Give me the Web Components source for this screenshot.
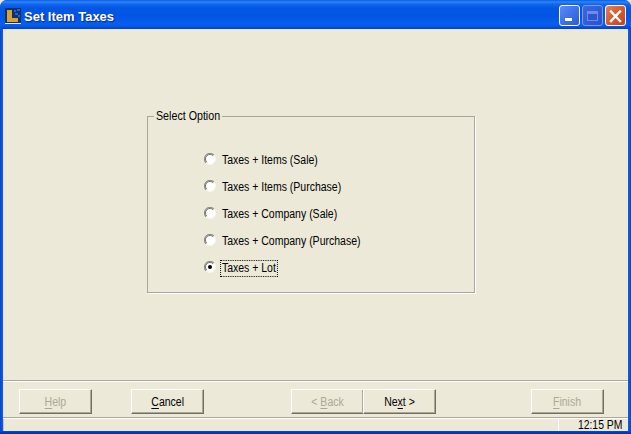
<!DOCTYPE html>
<html>
<head>
<meta charset="utf-8">
<title>Set Item Taxes</title>
<style>
    html, body { margin: 0; padding: 0; height: 100%; background: #ece9d8; }
    body { font: 12px "Liberation Sans", Arial, sans-serif; overflow: hidden; }
</style>
</head>
<body>
<xp-window caption="Set Item Taxes">
    <option-group label="Select Option">
        <option-radio>Taxes + Items (Sale)</option-radio>
        <option-radio>Taxes + Items (Purchase)</option-radio>
        <option-radio>Taxes + Company (Sale)</option-radio>
        <option-radio>Taxes + Company (Purchase)</option-radio>
        <option-radio checked>Taxes + Lot</option-radio>
    </option-group>
    <wizard-bar slot="footer"></wizard-bar>
    <status-bar slot="footer" time="12:15 PM"></status-bar>
</xp-window>

<script>
class CaptionButton extends HTMLElement {
    constructor() {
        super();
        this.attachShadow({ mode: 'open' });
    }

    connectedCallback() {
        const kind = this.getAttribute('kind');
        const glyphs = {
            min: '<rect x="6" y="13" width="7" height="3" fill="#fff"/>',
            max: '<rect x="5.5" y="6.5" width="10" height="9" fill="#2c55d0" stroke="#6d8ce6"/><rect x="5" y="6" width="11" height="3" fill="#6d8ce6"/>',
            close: '<path d="M6 6.5 15 16M15 6.5 6 16" stroke="#fff" stroke-width="2.4" stroke-linecap="square"/><path d="M1 3V1H4Q1.8 1.4 1 3Z" fill="#e8c89a"/>',
        };
        const looks = {
            min: 'linear-gradient(135deg, #5f8cf2 0, #3f72ea 50%, #2f5ad8 100%)',
            max: 'linear-gradient(135deg, #3a68e2 0, #2f5cd8 55%, #2a50cc 100%)',
            close: 'linear-gradient(135deg, #e0805c 0, #d8582f 50%, #c4431f 100%)',
        };
        const line = kind === 'max' ? '#7d9bea' : '#fff';
        this.shadowRoot.innerHTML = `
            <style>
                :host {
                    display: block;
                    width: 21px;
                    height: 21px;
                    box-sizing: border-box;
                    border: 1px solid ${line};
                    border-radius: 3px;
                    background: ${looks[kind]};
                    overflow: hidden;
                }
                svg { display: block; margin: -1px; }
            </style>
            <svg width="21" height="21" viewBox="0 0 21 21">${glyphs[kind]}</svg>
        `;
    }
}
customElements.define('caption-button', CaptionButton);

class XpWindow extends HTMLElement {
    constructor() {
        super();
        this.attachShadow({ mode: 'open' });
    }

    connectedCallback() {
        const caption = this.getAttribute('caption') || '';
        this.shadowRoot.innerHTML = `
            <style>
                :host {
                    display: flex;
                    flex-direction: column;
                    width: 631px;
                    height: 434px;
                    background:
                        linear-gradient(to bottom, transparent 431px, #0a4ada 431px, #00309c 434px),
                        linear-gradient(to right, #0a3fc8 0, #0a5ae8 2px, #0a5ae8 629px, #0a3fc8 631px);
                    border-radius: 7px 7px 0 0;
                    overflow: hidden;
                }
                .title {
                    height: 29px;
                    flex: none;
                    display: flex;
                    align-items: center;
                    padding: 0 5px 0 5px;
                    box-sizing: border-box;
                    background: linear-gradient(to bottom,
                        #0a5ce4 0, #2f84f6 2px, #1268ee 4px, #0357e4 8px, #0454e3 16px,
                        #0560ee 24px, #0558ea 26px, #0040d0 29px);
                }
                .icon { flex: none; display: block; margin-top: 2px; }
                .caption {
                    flex: 1;
                    margin-left: 3px;
                    margin-top: 3px;
                    color: #fff;
                    font: bold 13px "Liberation Sans", Arial, sans-serif;
                    text-shadow: 1px 1px 1px #0a2a90;
                    white-space: nowrap;
                }
                .buttons { display: flex; gap: 2px; margin-top: 2px; }
                .frame {
                    flex: 1;
                    min-height: 0;
                    display: flex;
                    flex-direction: column;
                    margin: 0 3px 3px;
                    background: #ece9d8;
                }
                .body {
                    flex: 1;
                    min-height: 0;
                    padding: 80px 154px 0 144px;
                }
                .footer { flex: none; }
            </style>
            <div class="title">
                <svg class="icon" width="16" height="16" viewBox="0 0 16 16">
                    <rect width="16" height="15" fill="#10306e"/>
                    <rect x="2" y="2" width="5" height="12" fill="#d4a236"/>
                    <rect x="2" y="10" width="11" height="4" fill="#d4a236"/>
                    <rect x="9" y="2" width="2" height="2" fill="#2a62c8"/>
                    <rect x="12" y="1" width="3" height="2" fill="#2a62c8"/>
                    <rect x="10" y="5" width="3" height="2" fill="#2a62c8"/>
                    <rect x="13" y="7" width="2" height="2" fill="#2a62c8"/>
                    <rect y="15" width="16" height="1" fill="#e8e8e8"/>
                </svg>
                <span class="caption">${caption}</span>
                <div class="buttons">
                    <caption-button kind="min"></caption-button>
                    <caption-button kind="max"></caption-button>
                    <caption-button kind="close"></caption-button>
                </div>
            </div>
            <div class="frame">
                <div class="body"><slot></slot></div>
                <div class="footer"><slot name="footer"></slot></div>
            </div>
        `;
    }
}
customElements.define('xp-window', XpWindow);

class OptionGroup extends HTMLElement {
    constructor() {
        super();
        this.attachShadow({ mode: 'open' });
    }

    connectedCallback() {
        const label = this.getAttribute('label') || '';
        this.shadowRoot.innerHTML = `
            <style>
                :host { display: block; width: 328px; }
                fieldset {
                    margin: 0;
                    padding: 0;
                    height: 184px;
                    box-sizing: border-box;
                    border: 1px solid #a9a79a;
                    box-shadow: 1px 1px 0 #fff;
                    display: block;
                }
                legend {
                    margin-left: 6px;
                    padding: 0 2px;
                    font: 12px "Liberation Sans", Arial, sans-serif;
                    color: #000;
                }
                legend span {
                    display: block;
                    width: 64px;
                    white-space: nowrap;
                    transform: scaleX(.89);
                    transform-origin: left;
                }
                .list {
                    display: flex;
                    flex-direction: column;
                    gap: 14px;
                    padding: 30px 0 0 56px;
                }
            </style>
            <fieldset>
                <legend><span>${label}</span></legend>
                <div class="list"><slot></slot></div>
            </fieldset>
        `;
    }
}
customElements.define('option-group', OptionGroup);

class OptionRadio extends HTMLElement {
    constructor() {
        super();
        this.attachShadow({ mode: 'open' });
    }

    connectedCallback() {
        const checked = this.hasAttribute('checked');
        this.shadowRoot.innerHTML = `
            <style>
                :host {
                    display: flex;
                    align-items: center;
                    height: 13px;
                    gap: 4px;
                    color: #000;
                    font: 12px "Liberation Sans", Arial, sans-serif;
                    white-space: nowrap;
                }
                svg { flex: none; display: block; }
                .text {
                    padding: 0 1px;
                    line-height: 15px;
                    height: 15px;
                    margin-top: 2px;
                    transform: scaleX(.875);
                    transform-origin: left;
                }
                :host([checked]) .text { outline: 1px dotted #000; }
            </style>
            <svg width="13" height="13" viewBox="0 0 13 13">
                <circle cx="6" cy="6" r="5.5" fill="#fff"/>
                <path d="M2.1 9.9A5.5 5.5 0 0 1 9.9 2.1" fill="none" stroke="#8f8d80" stroke-width="1.2"/>
                <path d="M2.8 9.2A4.5 4.5 0 0 1 9.2 2.8" fill="none" stroke="#55544c" stroke-width=".8"/>
                <path d="M2.1 9.9A5.5 5.5 0 0 0 9.9 2.1" fill="none" stroke="#f6f5ee" stroke-width="1.2"/>
                ${checked ? '<circle cx="6" cy="6" r="2" fill="#000"/>' : ''}
            </svg>
            <span class="text"><slot></slot></span>
        `;
    }
}
customElements.define('option-radio', OptionRadio);

class WizardButton extends HTMLElement {
    constructor() {
        super();
        this.attachShadow({ mode: 'open' });
    }

    connectedCallback() {
        this.shadowRoot.innerHTML = `
            <style>
                :host {
                    display: flex;
                    align-items: center;
                    justify-content: center;
                    width: 73px;
                    height: 25px;
                    box-sizing: border-box;
                    background: #ece9d8;
                    border-style: solid;
                    border-width: 1px;
                    border-color: #fff #716f64 #716f64 #fff;
                    box-shadow: inset -1px -1px 0 #aca899;
                    color: #000;
                    font: 12px "Liberation Sans", Arial, sans-serif;
                    white-space: nowrap;
                }
                :host([disabled]) { color: #aca899; }
                span { display: block; transform: scaleX(.875); }
            </style>
            <span><slot></slot></span>
        `;
    }
}
customElements.define('wizard-button', WizardButton);

class WizardBar extends HTMLElement {
    constructor() {
        super();
        this.attachShadow({ mode: 'open' });
    }

    connectedCallback() {
        this.shadowRoot.innerHTML = `
            <style>
                :host {
                    display: flex;
                    height: 37px;
                    box-sizing: border-box;
                    padding: 8px 24px 0 16px;
                    border-top: 1px solid #aca899;
                    box-shadow: inset 0 1px 0 #fff;
                }
                .gap-a { width: 39px; }
                .gap-b { width: 87px; }
                .gap-c { width: 95px; }
                .joined { margin-left: -1px; }
                u { text-underline-offset: 2px; }
            </style>
            <wizard-button disabled><u>H</u>elp</wizard-button>
            <div class="gap-a"></div>
            <wizard-button><u>C</u>ancel</wizard-button>
            <div class="gap-b"></div>
            <wizard-button disabled>&lt; <u>B</u>ack</wizard-button>
            <wizard-button class="joined">Ne<u>x</u>t &gt;</wizard-button>
            <div class="gap-c"></div>
            <wizard-button disabled><u>F</u>inish</wizard-button>
        `;
    }
}
customElements.define('wizard-bar', WizardBar);

class StatusBar extends HTMLElement {
    constructor() {
        super();
        this.attachShadow({ mode: 'open' });
    }

    connectedCallback() {
        const time = this.getAttribute('time') || '';
        this.shadowRoot.innerHTML = `
            <style>
                :host {
                    display: flex;
                    height: 14px;
                    box-sizing: border-box;
                    border-top: 1px solid #aca899;
                    box-shadow: inset 0 1px 0 #fff;
                    padding-top: 1px;
                }
                .main { flex: 1; border-left: 1px solid #c9c6b5; border-right: 1px solid #fff; }
                .clock {
                    width: 69px;
                    box-sizing: border-box;
                    padding-right: 6px;
                    display: flex;
                    justify-content: flex-end;
                    font: 12px/12px "Liberation Sans", Arial, sans-serif;
                    color: #000;
                }
                .clock span { display: block; transform: scaleX(.865); transform-origin: right; white-space: nowrap; }
            </style>
            <div class="main"></div>
            <div class="clock"><span>${time}</span></div>
        `;
    }
}
customElements.define('status-bar', StatusBar);
</script>
</body>
</html>
